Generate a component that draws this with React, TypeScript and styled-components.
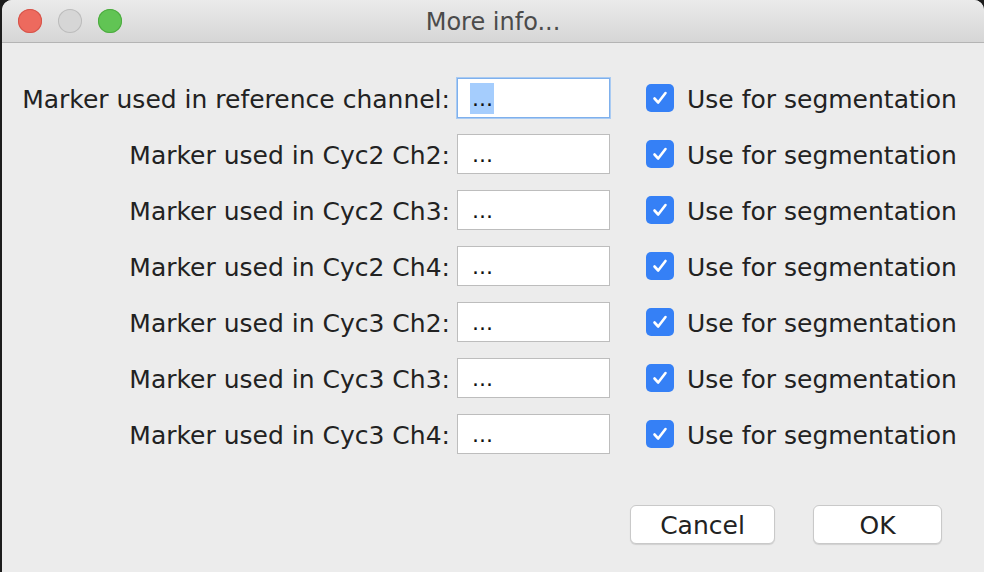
import React from "react";
import styled, { createGlobalStyle } from "styled-components";

const Global = createGlobalStyle`
  html, body { margin: 0; padding: 0; }
  body { background: #1c1c1c; font-family: "DejaVu Sans", "Liberation Sans", sans-serif; }
`;

const Page = styled.div`
  width: 984px;
  height: 572px;
  display: flex;
  background: #1c1c1c;
  overflow: hidden;
`;

const Window = styled.div`
  margin-left: 2px;
  flex: 1;
  display: flex;
  flex-direction: column;
  background: #ececec;
  border-top-left-radius: 10px;
  border-top-right-radius: 10px;
  overflow: hidden;
`;

const TitleBar = styled.div`
  height: 42px;
  flex: none;
  display: grid;
  grid-template-columns: 1fr auto 1fr;
  align-items: center;
  background: linear-gradient(#ebebeb, #d6d6d6);
  border-bottom: 1px solid #b4b4b4;
`;

const Lights = styled.div`
  display: flex;
  gap: 16px;
  padding-left: 16px;
`;

const Light = styled.span<{ $c: string; $b: string }>`
  width: 24px;
  height: 24px;
  border-radius: 50%;
  background: ${(p) => p.$c};
  box-shadow: inset 0 0 0 1px ${(p) => p.$b};
`;

const Title = styled.div`
  font-size: 24px;
  color: #4b4b4b;
  padding-top: 1px;
`;

const Body = styled.div`
  flex: 1;
  display: flex;
  flex-direction: column;
  padding-top: 35px;
`;

const Form = styled.div`
  display: grid;
  grid-template-columns: 448px 153px auto;
  column-gap: 7px;
  row-gap: 16px;
  align-items: center;
`;

const Label = styled.div`
  text-align: right;
  font-size: 25px;
  color: #222;
  white-space: nowrap;
  padding-top: 3px;
`;

const Field = styled.div<{ $focus?: boolean }>`
  height: 40px;
  box-sizing: border-box;
  background: #fff;
  border: 1px solid ${(p) => (p.$focus ? "#7fb0ec" : "#bdbdbd")};
  box-shadow: ${(p) => (p.$focus ? "0 0 0 1px #a9cbf3" : "none")};
  display: flex;
  align-items: center;
  padding-left: 12px;
  font-size: 22px;
  color: #111;
`;

const Sel = styled.span<{ $on?: boolean }>`
  background: ${(p) => (p.$on ? "#a5cdfd" : "transparent")};
  padding: 3px 1px 3px 2px;
  line-height: 25px;
`;

const CheckRow = styled.label`
  margin-left: 29px;
  display: flex;
  align-items: center;
  gap: 13px;
  font-size: 25px;
  color: #222;
  white-space: nowrap;
`;

const CheckText = styled.span`
  padding-top: 3px;
`;

const Box = styled.span`
  width: 28px;
  height: 28px;
  border-radius: 5px;
  background: #3580f6;
  display: flex;
  align-items: center;
  justify-content: center;
  flex: none;
`;

const Footer = styled.div`
  margin-top: auto;
  display: flex;
  justify-content: flex-end;
  gap: 38px;
  padding: 0 42px 28px 0;
`;

const Button = styled.button<{ $w: number }>`
  width: ${(p) => p.$w}px;
  height: 39px;
  background: #fff;
  border: 1px solid #c9c9c9;
  border-radius: 6px;
  box-shadow: 0 1px 1px rgba(0, 0, 0, 0.12);
  font-family: "DejaVu Sans", "Liberation Sans", sans-serif;
  font-size: 25px;
  color: #222;
  padding: 2px 0 0;
`;

const rows = [
  "Marker used in reference channel:",
  "Marker used in Cyc2 Ch2:",
  "Marker used in Cyc2 Ch3:",
  "Marker used in Cyc2 Ch4:",
  "Marker used in Cyc3 Ch2:",
  "Marker used in Cyc3 Ch3:",
  "Marker used in Cyc3 Ch4:",
];

const Check = () => (
  <svg width="18" height="18" viewBox="0 0 18 18">
    <path d="M3.5 9.5 L7.2 13.5 L14.5 4" fill="none" stroke="#fff" strokeWidth="2.6" strokeLinecap="round" strokeLinejoin="round" />
  </svg>
);

export default function App() {
  return (
    <>
      <Global />
      <Page>
        <Window>
          <TitleBar>
            <Lights>
              <Light $c="#ed6a5e" $b="#d5544a" />
              <Light $c="#d6d6d6" $b="#bcbcbc" />
              <Light $c="#61c454" $b="#4caa3f" />
            </Lights>
            <Title>More info...</Title>
            <div />
          </TitleBar>
          <Body>
            <Form>
              {rows.map((r, i) => (
                <React.Fragment key={r}>
                  <Label>{r}</Label>
                  <Field $focus={i === 0}>
                    <Sel $on={i === 0}>...</Sel>
                  </Field>
                  <CheckRow>
                    <Box>
                      <Check />
                    </Box>
                    <CheckText>Use for segmentation</CheckText>
                  </CheckRow>
                </React.Fragment>
              ))}
            </Form>
            <Footer>
              <Button $w={145}>Cancel</Button>
              <Button $w={129}>OK</Button>
            </Footer>
          </Body>
        </Window>
      </Page>
    </>
  );
}
